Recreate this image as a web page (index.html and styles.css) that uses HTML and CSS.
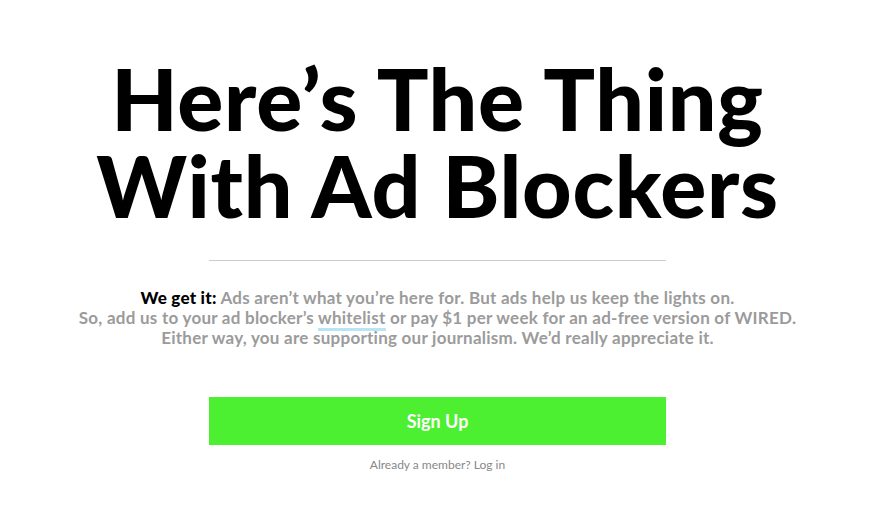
FILE: index.html
```html
<!DOCTYPE html>
<html lang="en">
<head>
    <meta charset="UTF-8">
    <meta name="viewport" content="width=device-width, initial-scale=1.0">
    <title>Here’s The Thing With Ad Blockers</title>
    <link rel="stylesheet" href="styles.css">
</head>
<body>
    <main class="gate">
        <h1 class="gate-title">
            <span class="gate-line">Here’s The Thing</span>
            <span class="gate-line">With Ad Blockers</span>
        </h1>
        <hr class="gate-rule">
        <p class="gate-text">
            <strong>We get it:</strong> Ads aren’t what you’re here for. But ads help us keep the lights on.<br>
            So, add us to your ad blocker’s <a href="#">whitelist</a> or pay $1 per week for an ad-free version of WIRED.<br>
            Either way, you are supporting our journalism. We’d really appreciate it.
        </p>
        <a class="gate-button" href="#">Sign Up</a>
        <p class="gate-login">Already a member? <a href="#">Log in</a></p>
    </main>
</body>
</html>
```

FILE: styles.css
```css
body {
    margin: 0;
    padding: 0;
    background-color: #fff;
    color: #000;
    font-family: Lato, "Liberation Sans", sans-serif;
}
.gate {
    display: flex;
    flex-direction: column;
    align-items: center;
    text-align: center;
    padding: 54px 3px 0 0;
}
.gate-title {
    margin: 0;
    font-size: 86px;
    font-weight: 900;
    line-height: 87px;
    letter-spacing: 0.7px;
}
.gate-line {
    display: block;
}
.gate-rule {
    width: 457px;
    margin: 32px 0 0;
    border: 0;
    border-top: 1px solid #ccc;
}
.gate-text {
    margin: 27px 0 0;
    font-size: 17px;
    line-height: 20px;
    font-weight: 700;
    letter-spacing: 0.25px;
    color: #9b9b9b;
}
.gate-text strong {
    color: #000;
}
.gate-text a,
.gate-login a {
    color: inherit;
    text-decoration: none;
    border-bottom: 3px solid #b8e4f4;
}
.gate-button {
    display: block;
    width: 457px;
    height: 48px;
    margin-top: 49px;
    background-color: #4cf030;
    color: #fff;
    font-size: 18px;
    font-weight: 700;
    line-height: 48px;
    text-decoration: none;
}
.gate-login {
    margin: 12px 0 0;
    font-size: 12px;
    color: #888;
}
.gate-login a {
    border-bottom-width: 2px;
}
```
